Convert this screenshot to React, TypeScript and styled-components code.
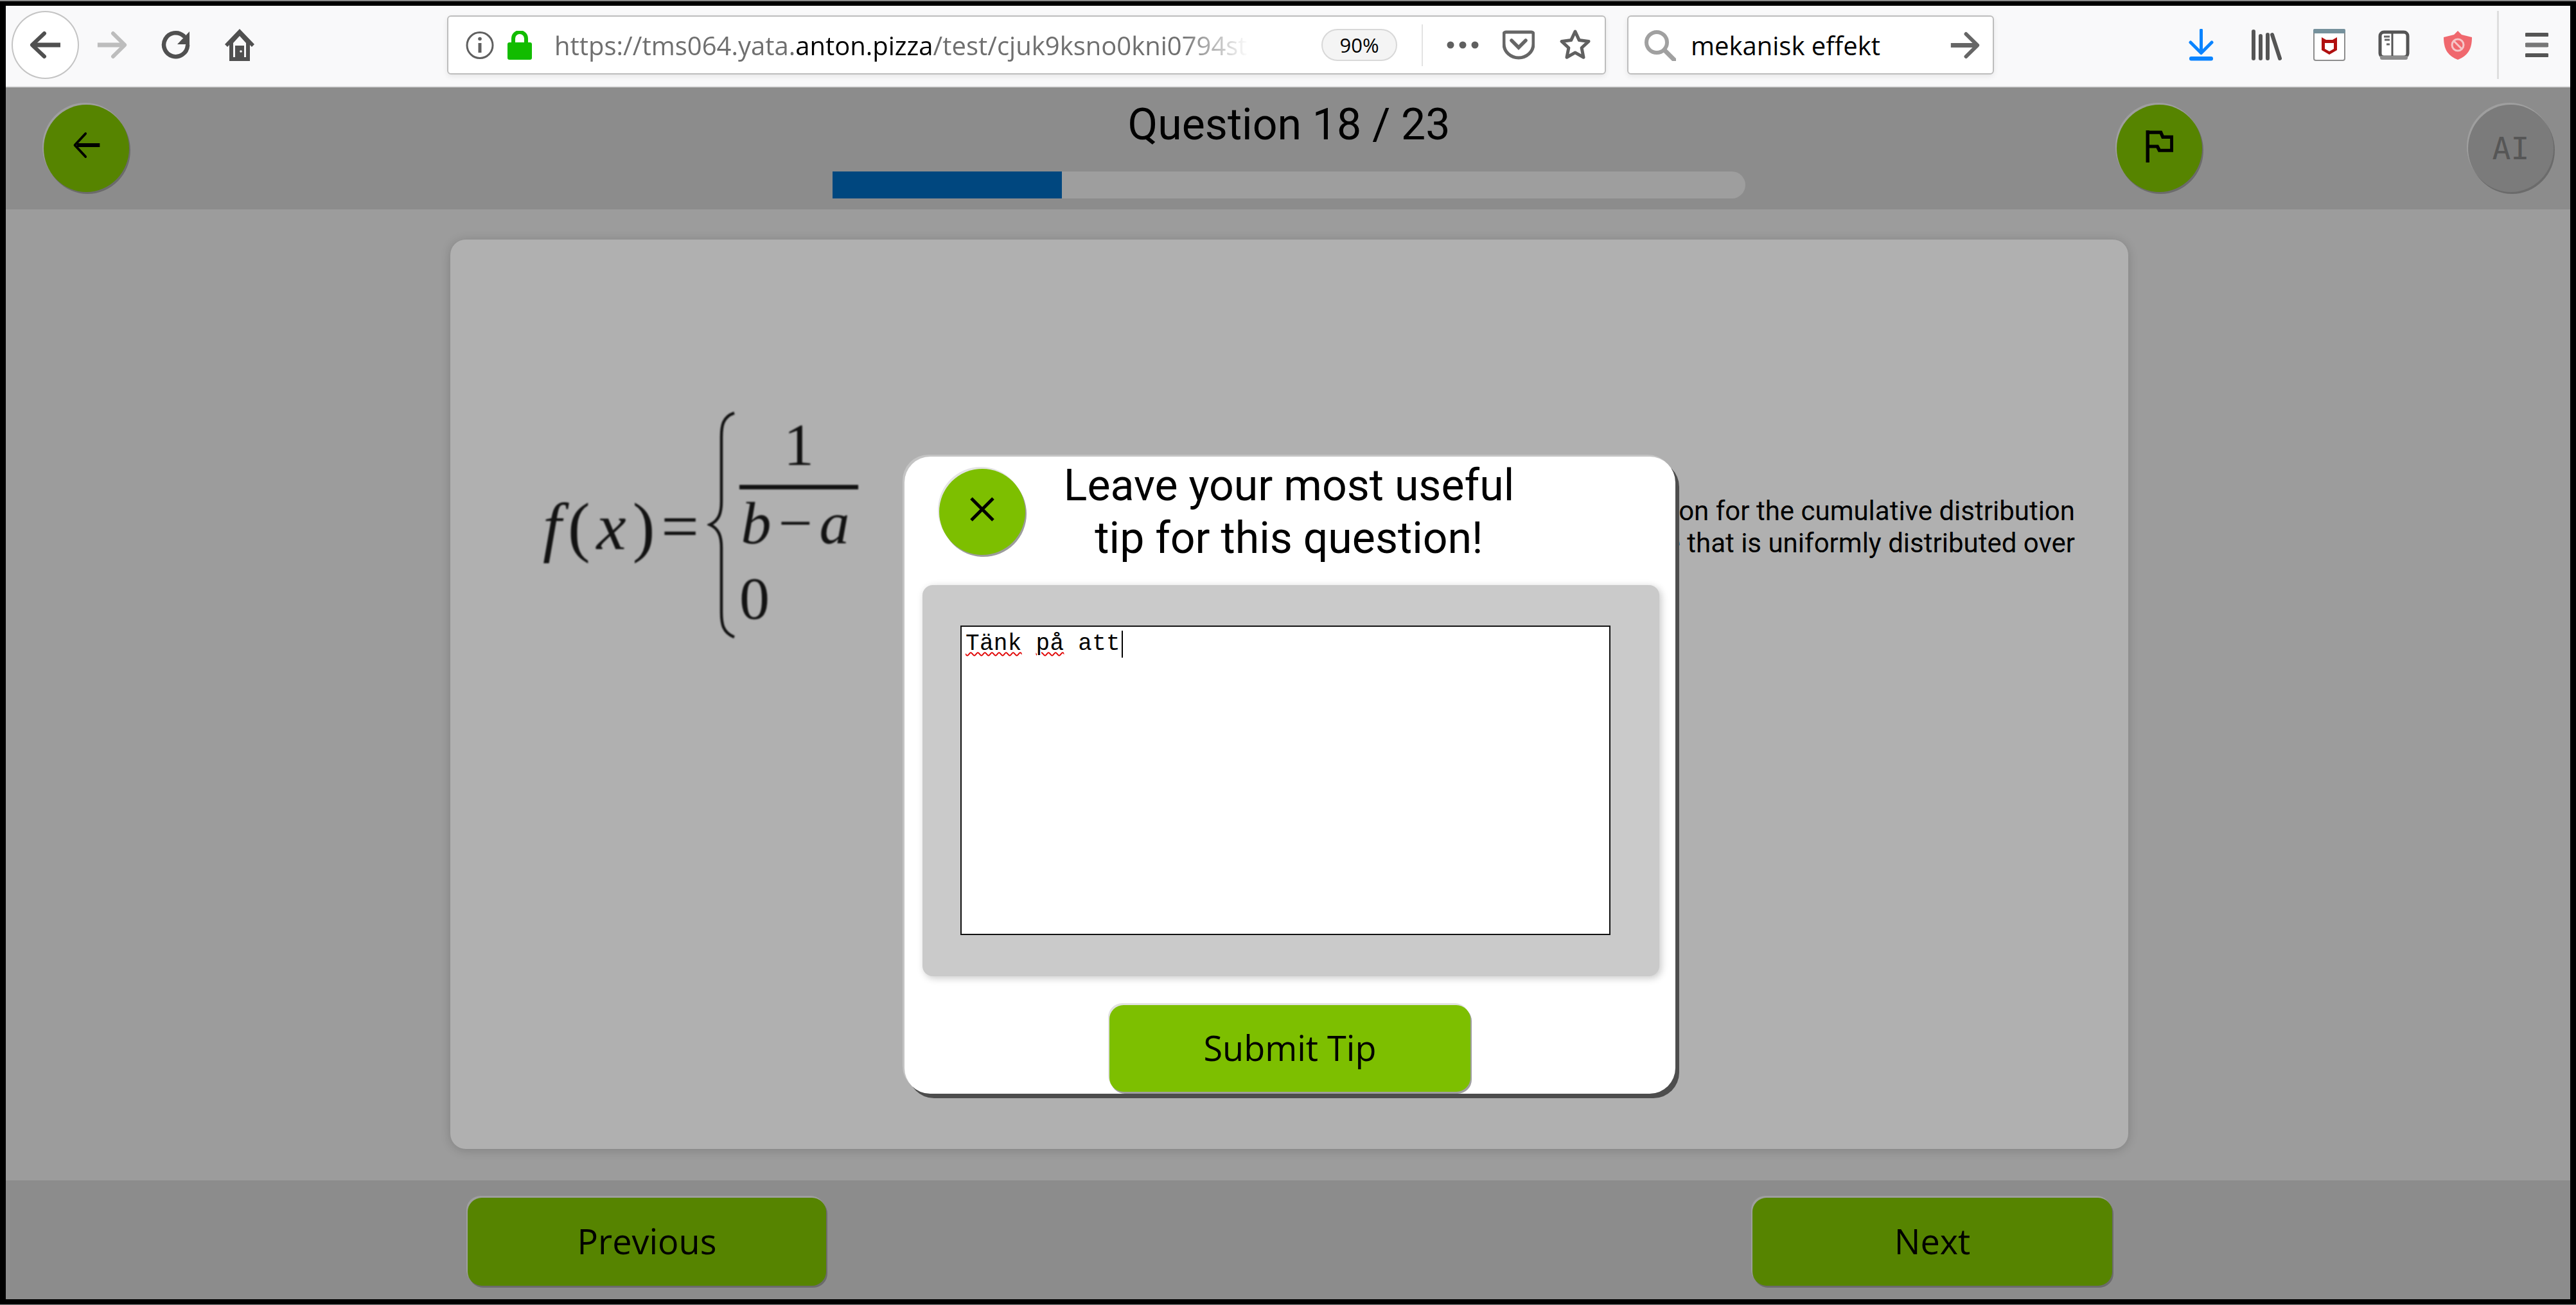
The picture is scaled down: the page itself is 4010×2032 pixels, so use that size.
import React from "react";
import styled, { createGlobalStyle } from "styled-components";

const Global = createGlobalStyle`
  html, body { margin: 0; padding: 0; background: #000; }
  * { box-sizing: border-box; }
`;

const Frame = styled.div`
  width: 4010px;
  height: 2032px;
  padding: 9px 9px 9px 9px;
  background: #000;
  display: flex;
  flex-direction: column;
  box-shadow: inset 0 2px 0 #8a8a8a, inset 0 -1px 0 #8a8a8a;
  font-family: Roboto, "Liberation Sans", sans-serif;
`;

const Toolbar = styled.div`
  height: 127px;
  flex: none;
  display: flex;
  align-items: center;
  padding-bottom: 3px;
  background: #f9f9fa;
  border-bottom: 2px solid #dfdfe0;
`;

const Glyph = styled.svg<{ $w: number; $h: number; $ml?: number }>`
  flex: none;
  display: block;
  width: ${(p) => p.$w}px;
  height: ${(p) => p.$h}px;
  margin-left: ${(p) => p.$ml ?? 0}px;
`;

const BackCircle = styled.div`
  flex: none;
  width: 105px;
  height: 106px;
  margin-left: 9px;
  border-radius: 50%;
  background: #fff;
  border: 2px solid #c4c4c4;
  display: flex;
  align-items: center;
  justify-content: center;
`;

const Field = styled.div<{ $w: number; $ml: number }>`
  flex: none;
  width: ${(p) => p.$w}px;
  height: 92px;
  margin-left: ${(p) => p.$ml}px;
  display: flex;
  align-items: center;
  background: #fff;
  border: 2px solid #bdbdbd;
  border-radius: 6px;
  box-shadow: 0 3px 8px rgba(0, 0, 0, 0.08);
  font-family: "Open Sans", sans-serif;
`;

const UrlText = styled.div`
  flex: none;
  width: 1081px;
  margin-left: 34px;
  font-size: 40px;
  white-space: nowrap;
  overflow: hidden;
  color: #6f6f6f;
  -webkit-mask-image: linear-gradient(90deg, #000 90%, transparent 100%);
  mask-image: linear-gradient(90deg, #000 90%, transparent 100%);
  b {
    font-weight: 400;
    color: #000;
  }
`;

const ZoomPill = styled.div`
  flex: none;
  width: 118px;
  height: 50px;
  margin-left: 113px;
  border-radius: 25px;
  border: 2px solid #d8d8d8;
  background: #f4f4f4;
  display: flex;
  align-items: center;
  justify-content: center;
  font-size: 31px;
  color: #000;
`;

const FieldDivider = styled.div`
  flex: none;
  width: 2px;
  height: 65px;
  margin-left: 38px;
  background: #e3e3e3;
`;

const SearchText = styled.div`
  flex: none;
  width: 402px;
  margin-left: 23px;
  font-size: 40px;
  color: #000;
  white-space: nowrap;
`;

const BarDivider = styled.div`
  flex: none;
  width: 3px;
  height: 106px;
  margin-left: 38px;
  background: #dedede;
`;

const Page = styled.div`
  flex: 1;
  position: relative;
  display: flex;
  flex-direction: column;
  min-height: 0;
`;

const Header = styled.header`
  flex: none;
  height: 190px;
  display: flex;
  align-items: flex-start;
  padding-top: 27px;
  background: #cbcbcb;
`;

const RoundButton = styled.button<{ $ml: number; $off?: boolean; $lift?: number }>`
  flex: none;
  width: 133px;
  height: 136px;
  margin-left: ${(p) => p.$ml}px;
  padding: 0 0 ${(p) => p.$lift ?? 0}px;
  border: none;
  border-radius: 50%;
  background: ${(p) => (p.$off ? "#b2b2b2" : "#7dbf00")};
  box-shadow: -2px -3px 0 #e6e6e6, 2px 3px 0 #9c9c9c;
  display: flex;
  align-items: center;
  justify-content: center;
  color: #000;
`;

const AiLabel = styled.span`
  font-family: "DejaVu Sans Mono", monospace;
  font-size: 48px;
  color: #7d7d7d;
`;

const HeadCenter = styled.div`
  flex: none;
  width: 1421px;
  margin-left: 1095px;
  margin-top: -27px;
  display: flex;
  flex-direction: column;
  align-items: center;
`;

const Title = styled.h1`
  margin: 18px 0 33px;
  font-size: 68px;
  line-height: 80px;
  font-weight: 400;
  color: #000;
`;

const Track = styled.div`
  width: 100%;
  height: 42px;
  background: #e5e5e5;
  border-radius: 0 21px 21px 0;
  overflow: hidden;
`;

const Fill = styled.div`
  height: 100%;
  background: #0067b8;
`;

const Main = styled.main`
  flex: 1;
  min-height: 0;
  padding: 47px 0 49px 692px;
  background: #e2e2e2;
`;

const Card = styled.section`
  width: 2612px;
  height: 100%;
  padding-left: 135px;
  padding-right: 83px;
  display: flex;
  background: #fff;
  border-radius: 24px;
  box-shadow: 0 2px 16px rgba(0, 0, 0, 0.18);
`;

const Formula = styled.div`
  flex: none;
  height: 353px;
  margin-top: 268px;
  display: flex;
  align-items: center;
  font-family: "Liberation Serif", serif;
  color: #1c1c1c;
  filter: blur(1.1px);
`;

const Lhs = styled.div`
  flex: none;
  width: 247px;
  margin: 4px 0 0 9px;
  font-size: 104px;
  line-height: 1;
  letter-spacing: 10px;
  font-style: italic;
  white-space: nowrap;
  span {
    font-style: normal;
  }
`;

const Cases = styled.div`
  flex: none;
  align-self: flex-start;
  margin: 3px 0 0 6px;
  display: flex;
  flex-direction: column;
  align-items: flex-start;
`;

const Fraction = styled.div`
  width: 185px;
  display: flex;
  flex-direction: column;
  align-items: center;
`;

const Numerator = styled.div`
  font-size: 94px;
  line-height: 96px;
  padding-bottom: 15px;
  box-sizing: content-box;
`;

const Rule = styled.div`
  width: 100%;
  height: 7px;
  background: #1c1c1c;
`;

const Denominator = styled.div`
  margin-top: 4px;
  font-size: 94px;
  line-height: 96px;
  font-style: italic;
  white-space: nowrap;
  letter-spacing: 11px;
  span {
    font-style: normal;
  }
`;

const Zero = styled.div`
  font-size: 94px;
  line-height: 96px;
  margin-top: 21px;
`;

const Question = styled.div`
  flex: 1;
  min-width: 0;
  margin-top: 398px;
  font-size: 42px;
  line-height: 50px;
  text-align: right;
  color: #000;
`;

const Footer = styled.footer`
  flex: none;
  height: 185px;
  display: flex;
  align-items: flex-start;
  padding-top: 27px;
  background: #cbcbcb;
`;

const NavButton = styled.button<{ $w: number; $ml: number }>`
  flex: none;
  width: ${(p) => p.$w}px;
  height: 137px;
  margin-left: ${(p) => p.$ml}px;
  padding: 0 0 3px;
  border: none;
  border-radius: 22px;
  background: #7dbf00;
  box-shadow: -2px -3px 0 #e6e6e6, 2px 3px 0 #9c9c9c;
  font-family: "Open Sans", sans-serif;
  font-size: 54px;
  color: #000;
`;

const Overlay = styled.div`
  position: absolute;
  inset: 0;
  display: flex;
  justify-content: center;
  align-items: flex-start;
  padding: 575px 0 0 6px;
  background: rgba(0, 0, 0, 0.31);
`;

const Modal = styled.div`
  width: 1200px;
  height: 992px;
  display: flex;
  flex-direction: column;
  background: #fff;
  border-radius: 40px;
  box-shadow: 6px 7px 0 #4d4d4d, -3px -3px 0 rgba(255, 255, 255, 0.25);
`;

const ModalHead = styled.div`
  flex: none;
  height: 200px;
  display: flex;
  align-items: flex-start;
`;

const CloseButton = styled(RoundButton)`
  width: 134px;
  height: 134px;
  margin-top: 19px;
  box-shadow: -2px -3px 0 #e4e4e4, 2px 3px 0 #9c9c9c;
`;

const ModalTitle = styled.h2`
  flex: none;
  width: 821px;
  margin: 4px 0 0;
  font-size: 68px;
  line-height: 82px;
  font-weight: 400;
  text-align: center;
  color: #000;
`;

const TipBlock = styled.div`
  flex: none;
  width: 1147px;
  height: 609px;
  margin-left: 28px;
  padding: 63px 0 0 59px;
  background: #cacaca;
  border-radius: 16px;
  box-shadow: 3px 3px 12px rgba(0, 0, 0, 0.22);
`;

const TipField = styled.div`
  width: 1012px;
  height: 482px;
  padding: 6px 6px;
  border: 2px solid #111;
  background: #fff;
  font-family: "Liberation Mono", monospace;
  font-size: 36px;
  letter-spacing: 0.3px;
  line-height: 42px;
  color: #000;
  white-space: pre;
`;

const Misspelled = styled.span`
  text-decoration: underline wavy #e00000 2px;
  text-underline-offset: 3px;
`;

const Caret = styled.span`
  display: inline-block;
  width: 2px;
  height: 42px;
  margin-left: 2px;
  vertical-align: top;
  background: #000;
`;

const SubmitButton = styled(NavButton)`
  height: 135px;
  margin-top: 45px;
  box-shadow: -2px -3px 0 #e2e2e2, 2px 3px 0 #a0a0a0;
`;

const Arrow = ({ color, flip, w, h, ml, head = 6, shaft = 7 }: { color: string; flip?: boolean; w: number; h: number; ml?: number; head?: number; shaft?: number }) => (
  <Glyph $w={w} $h={h} $ml={ml} viewBox="0 0 52 44" preserveAspectRatio="none">
    <g transform={flip ? "matrix(-1 0 0 1 52 0)" : undefined} fill="none" stroke={color} strokeLinecap="round" strokeLinejoin="round">
      <path d="M24 4 5 22l19 18" strokeWidth={head} />
      <path d="M9 22h40" strokeWidth={shaft} strokeLinecap="butt" />
    </g>
  </Glyph>
);

export default function App() {
  return (
    <Frame>
      <Global />
      <Toolbar>
        <BackCircle>
          <Arrow color="#505050" w={52} h={44} />
        </BackCircle>
        <Arrow color="#bdbdbd" flip w={50} h={44} ml={26} />
        <Glyph $w={47} $h={46} $ml={52} viewBox="0 0 47 46">
          <path d="M41 24a18.500 18.500 0 1 1-6-15" fill="none" stroke="#505050" strokeWidth="6.500" strokeLinecap="round" />
          <path d="M44 2v20H25z" fill="#505050" />
        </Glyph>
        <Glyph $w={50} $h={50} $ml={50} viewBox="0 0 50 50">
          <path d="M25 0 2 24l4 4 3-3v25h32V25l3 3 4-4z" fill="#505050" />
          <path d="M15 22 25 11l10 11v22h-3V26H18v18h-3z" fill="#f9f9fa" />
          <circle cx="27" cy="35" r="1.800" fill="#f9f9fa" />
        </Glyph>
        <Field $w={1804} $ml={298}>
          <Glyph $w={44} $h={45} $ml={27} viewBox="0 0 44 45">
            <circle cx="22" cy="22.500" r="20" fill="none" stroke="#606060" strokeWidth="3" />
            <circle cx="22" cy="12.500" r="2.800" fill="#606060" />
            <path d="M19.500 19h5v15h-5z" fill="#606060" />
          </Glyph>
          <Glyph $w={40} $h={45} $ml={20} viewBox="0 0 40 45">
            <path d="M10 20v-8a10 10 0 0 1 20 0v8" fill="none" stroke="#12bc00" strokeWidth="6" />
            <rect x="1" y="18" width="38" height="27" rx="3" fill="#12bc00" />
          </Glyph>
          <UrlText>
            https://tms064.yata.<b>anton.pizza</b>/test/cjuk9ksno0kni0794st
          </UrlText>
          <ZoomPill>90%</ZoomPill>
          <FieldDivider />
          <Glyph $w={50} $h={12} $ml={37} viewBox="0 0 50 12">
            <circle cx="6" cy="6" r="5.500" fill="#606060" />
            <circle cx="25" cy="6" r="5.500" fill="#606060" />
            <circle cx="44" cy="6" r="5.500" fill="#606060" />
          </Glyph>
          <Glyph $w={50} $h={46} $ml={37} viewBox="0 0 50 46">
            <path d="M5 3h40a3 3 0 0 1 3 3v15c0 13-11 22-23 22S2 34 2 21V6a3 3 0 0 1 3-3z" fill="none" stroke="#666" strokeWidth="5" />
            <path d="M14 16l11 11 11-11" fill="none" stroke="#666" strokeWidth="5.500" strokeLinecap="round" />
          </Glyph>
          <Glyph $w={50} $h={50} $ml={38} viewBox="0 0 50 50">
            <path d="M25 4l6.300 13.600 14.700 1.800-10.900 10.100 2.900 14.700L25 36.900l-13 7.300 2.900-14.700L4 19.400l14.700-1.800z" fill="none" stroke="#606060" strokeWidth="5" strokeLinejoin="round" />
          </Glyph>
        </Field>
        <Field $w={571} $ml={33}>
          <Glyph $w={51} $h={50} $ml={23} viewBox="0 0 51 50">
            <circle cx="21" cy="21" r="16" fill="none" stroke="#a0a0a0" strokeWidth="6" />
            <path d="M33 33l15 15" stroke="#a0a0a0" strokeWidth="7" strokeLinecap="round" />
          </Glyph>
          <SearchText>mekanisk effekt</SearchText>
          <Arrow color="#666" flip w={49} h={43} />
        </Field>
        <Glyph $w={39} $h={50} $ml={303} viewBox="0 0 39 50">
          <path d="M19.500 2v35M3 21l16.500 16.500L36 21" fill="none" stroke="#0a84ff" strokeWidth="5" strokeLinecap="round" strokeLinejoin="round" />
          <rect x="1" y="43" width="37" height="6.500" rx="3" fill="#0a84ff" />
        </Glyph>
        <Glyph $w={48} $h={48} $ml={58} viewBox="0 0 48 48">
          <path d="M4 3v42M15 10v35M26 8v37M33 8l12 37" fill="none" stroke="#555" strokeWidth="6" strokeLinecap="round" />
        </Glyph>
        <Glyph $w={50} $h={50} $ml={49} viewBox="0 0 50 50">
          <rect x="1" y="1" width="48" height="48" rx="3" fill="#fff" stroke="#8e8e8e" strokeWidth="2" />
          <rect x="0" y="0" width="50" height="7" rx="2" fill="#76919c" />
          <path d="M13 13l7 4h10l7-4v20l-12 7-12-7z" fill="#b01010" />
          <path d="M18 22h14v9l-7 4-7-4z" fill="#fff" />
        </Glyph>
        <Glyph $w={49} $h={46} $ml={51} viewBox="0 0 49 46">
          <rect x="3" y="3" width="43" height="39" rx="6" fill="#fff" stroke="#555" strokeWidth="5" />
          <path d="M22 3v39" stroke="#555" strokeWidth="3" />
          <path d="M9 10h9M10 15h8M13 22h5" stroke="#666" strokeWidth="3" />
          <path d="M3 40h43v3a3 3 0 0 1-3 3H6a3 3 0 0 1-3-3z" fill="#8d8d8d" />
        </Glyph>
        <Glyph $w={46} $h={47} $ml={52} viewBox="0 0 46 47">
          <path d="M23 1l6 6 16 4c0 18-6 29-22 35C7 40 1 29 1 11l16-4z" fill="#f0686e" />
          <circle cx="23" cy="23" r="9" fill="none" stroke="#f6c6c8" strokeWidth="3" />
          <path d="M17 17l12 12" stroke="#f6c6c8" strokeWidth="3" />
        </Glyph>
        <BarDivider />
        <Glyph $w={36} $h={38} $ml={41} viewBox="0 0 36 38">
          <path d="M2 3h32" stroke="#555" strokeWidth="6" strokeLinecap="round" />
          <path d="M2 19h32" stroke="#777" strokeWidth="7" strokeLinecap="round" />
          <path d="M2 35h32" stroke="#555" strokeWidth="6" strokeLinecap="round" />
        </Glyph>
      </Toolbar>
      <Page>
        <Header>
          <RoundButton $ml={59} $lift={10}>
            <Arrow color="#000" w={46} h={44} head={4} shaft={6} />
          </RoundButton>
          <HeadCenter>
            <Title>Question 18 / 23</Title>
            <Track>
              <Fill style={{ width: `${(357 / 1421) * 100}%` }} />
            </Track>
          </HeadCenter>
          <RoundButton $ml={578} $lift={6}>
            <Glyph $w={43} $h={50} viewBox="0 0 40 48" preserveAspectRatio="none">
              <path d="M3 0v48" stroke="#000" strokeWidth="5" />
              <path d="M3 3h19l3 7h13v20H20l-3-6H3" fill="none" stroke="#000" strokeWidth="5" />
            </Glyph>
          </RoundButton>
          <RoundButton $ml={414} $off>
            <AiLabel>AI</AiLabel>
          </RoundButton>
        </Header>
        <Main>
          <Card>
            <Formula>
              <Lhs>
                f<span>(</span>x<span>)</span>
                <span>=</span>
              </Lhs>
              <Glyph $w={44} $h={353} $ml={9} viewBox="0 0 44 353">
                <path
                  d="M42 2C24 8 22 22 22 40v100c0 18-4 30-18 36 14 6 18 18 18 36v100c0 18 2 32 20 39"
                  fill="none"
                  stroke="#1c1c1c"
                  strokeWidth="4.500"
                />
              </Glyph>
              <Cases>
                <Fraction>
                  <Numerator>1</Numerator>
                  <Rule />
                  <Denominator>
                    b<span>−</span>a
                  </Denominator>
                </Fraction>
                <Zero>0</Zero>
              </Cases>
            </Formula>
            <Question>
              Find the correct expression for the cumulative distribution
              <br />
              function of a random variable that is uniformly distributed over
            </Question>
          </Card>
        </Main>
        <Footer>
          <NavButton $w={558} $ml={719}>Previous</NavButton>
          <NavButton $w={560} $ml={1442}>Next</NavButton>
        </Footer>
        <Overlay>
          <Modal>
            <ModalHead>
              <CloseButton $ml={54} $lift={8}>
                <Glyph $w={40} $h={40} viewBox="0 0 40 40">
                  <path d="M3 3l34 34M37 3L3 37" stroke="#000" strokeWidth="5" />
                </Glyph>
              </CloseButton>
              <ModalTitle>
                Leave your most useful
                <br />
                tip for this question!
              </ModalTitle>
            </ModalHead>
            <TipBlock>
              <TipField>
                <Misspelled>Tänk</Misspelled> <Misspelled>på</Misspelled> att
                <Caret />
              </TipField>
            </TipBlock>
            <SubmitButton $w={562} $ml={319}>Submit Tip</SubmitButton>
          </Modal>
        </Overlay>
      </Page>
    </Frame>
  );
}
